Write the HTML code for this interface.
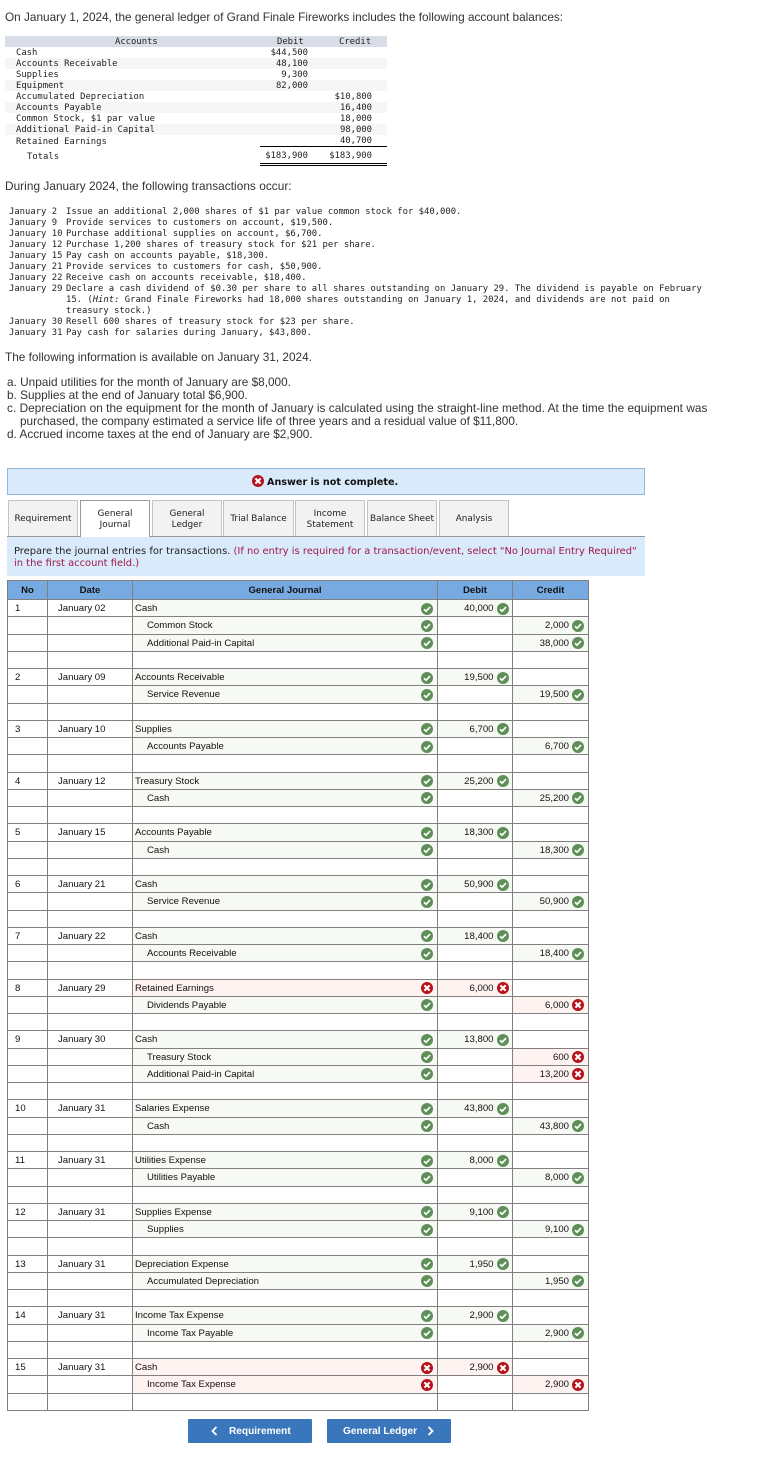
<!DOCTYPE html>
<html><head><meta charset="utf-8">
<style>
html,body{margin:0;padding:0;background:#fff}
#p{position:relative;width:781px;height:1482px;overflow:hidden;font-family:"Liberation Sans",sans-serif;color:#000}
.t{position:absolute;white-space:pre;font-size:11.8px;line-height:14px;color:#333}
.m{position:absolute;white-space:pre;font-family:"DejaVu Sans Mono",monospace;font-size:8.9px;line-height:11px;color:#222;margin-top:2px}
.rt{text-align:right}
.bar{position:absolute;left:5px;width:382px;height:11px}
.tab{position:absolute;top:500px;height:36px;box-sizing:border-box;border:1px solid #c4c4c4;border-bottom:0;background:#f2f2f2;font-family:"DejaVu Sans",sans-serif;font-size:8.9px;line-height:11px;color:#222;display:flex;align-items:center;justify-content:center;text-align:center;padding-top:2px}
#tb{position:absolute;left:7px;top:580px;width:582px;box-sizing:border-box;border:1px solid #808080;border-bottom:0;border-left-width:1px}
.r{display:flex;height:17.255px;box-sizing:border-box;border-bottom:1px solid #808080;font-size:9.6px;line-height:18px;color:#111}
.h{height:19px;background:#78aae2;font-weight:bold;font-size:9.6px;line-height:19px;text-align:center}
.r>div{box-sizing:border-box;border-right:1px solid #808080;position:relative;flex:none;white-space:pre}
.n{width:40px;padding-left:7px}
.d{width:85px;padding-left:10px}
.a{width:305px;padding-left:2px}
.a.in{padding-left:14px}
.b{width:75px;text-align:right;padding-right:18.5px}
.c{width:75px;text-align:right;padding-right:19px;border-right:0!important}
.h .n,.h .d,.h .a,.h .b,.h .c{padding:0;text-align:center}
.g{background:#f7f9f5}
.x{background:#fff3f1}
svg.i{position:absolute;width:12px;height:12px;top:2.5px;right:3px}
.a svg.i,.c svg.i{right:4px}
.btn{position:absolute;top:1419px;width:124px;height:24px;background:#3a76bb;border-radius:1px;color:#fff;font-weight:bold;font-size:10.1px;line-height:25px}
</style></head><body>
<svg width="0" height="0" style="position:absolute"><defs>
<symbol id="k" viewBox="0 0 12 12"><circle cx="6" cy="6" r="6" fill="#5f8f59"/><path d="M3 6.2L5.1 8.2L9 4.1" fill="none" stroke="#fff" stroke-width="1.7"/></symbol>
<symbol id="w" viewBox="0 0 12 12"><circle cx="6" cy="6" r="6" fill="#b5121b"/><path d="M3.4 3.4L8.6 8.6M8.6 3.4L3.4 8.6" fill="none" stroke="#fff" stroke-width="2.1"/></symbol>
</defs></svg>
<div id="p">
<div class="t" style="left:5px;top:9.5px">On January 1, 2024, the general ledger of Grand Finale Fireworks includes the following account balances:</div>

<div class="bar" style="top:36px;background:#d9dde8"></div>
<div class="bar" style="top:58px;background:#f6f6f6"></div>
<div class="bar" style="top:80px;background:#f6f6f6"></div>
<div class="bar" style="top:102px;background:#f6f6f6"></div>
<div class="bar" style="top:124px;background:#f6f6f6"></div>
<div class="m" style="left:115px;top:35px">Accounts</div>
<div class="m" style="left:277px;top:35px">Debit</div>
<div class="m" style="left:339px;top:35px">Credit</div>
<div class="m" style="left:16px;top:46px">Cash</div>
<div class="m" style="left:16px;top:57px">Accounts Receivable</div>
<div class="m" style="left:16px;top:68px">Supplies</div>
<div class="m" style="left:16px;top:79px">Equipment</div>
<div class="m" style="left:16px;top:90px">Accumulated Depreciation</div>
<div class="m" style="left:16px;top:101px">Accounts Payable</div>
<div class="m" style="left:16px;top:112px">Common Stock, $1 par value</div>
<div class="m" style="left:16px;top:123px">Additional Paid-in Capital</div>
<div class="m" style="left:16px;top:135px">Retained Earnings</div>
<div class="m" style="left:27px;top:150px">Totals</div>
<div class="m rt" style="right:473px;top:46px">$44,500</div>
<div class="m rt" style="right:473px;top:57px">48,100</div>
<div class="m rt" style="right:473px;top:68px">9,300</div>
<div class="m rt" style="right:473px;top:79px">82,000</div>
<div class="m rt" style="right:409px;top:90px">$10,800</div>
<div class="m rt" style="right:409px;top:101px">16,400</div>
<div class="m rt" style="right:409px;top:112px">18,000</div>
<div class="m rt" style="right:409px;top:123px">98,000</div>
<div class="m rt" style="right:409px;top:134px">40,700</div>
<div class="m rt" style="right:473px;top:149px">$183,900</div>
<div class="m rt" style="right:409px;top:149px">$183,900</div>
<div style="position:absolute;left:260px;top:146px;width:127px;height:1px;background:#000"></div>
<div style="position:absolute;left:260px;top:163px;width:127px;height:1px;background:#000"></div>
<div style="position:absolute;left:260px;top:165px;width:127px;height:1px;background:#000"></div>

<div class="t" style="left:5px;top:179px;letter-spacing:.05px">During January 2024, the following transactions occur:</div>

<div class="m" style="left:9px;top:205px">January 2</div><div class="m" style="left:66px;top:205px">Issue an additional 2,000 shares of $1 par value common stock for $40,000.</div>
<div class="m" style="left:9px;top:216px">January 9</div><div class="m" style="left:66px;top:216px">Provide services to customers on account, $19,500.</div>
<div class="m" style="left:9px;top:227px">January 10</div><div class="m" style="left:66px;top:227px">Purchase additional supplies on account, $6,700.</div>
<div class="m" style="left:9px;top:238px">January 12</div><div class="m" style="left:66px;top:238px">Purchase 1,200 shares of treasury stock for $21 per share.</div>
<div class="m" style="left:9px;top:249px">January 15</div><div class="m" style="left:66px;top:249px">Pay cash on accounts payable, $18,300.</div>
<div class="m" style="left:9px;top:260px">January 21</div><div class="m" style="left:66px;top:260px">Provide services to customers for cash, $50,900.</div>
<div class="m" style="left:9px;top:271px">January 22</div><div class="m" style="left:66px;top:271px">Receive cash on accounts receivable, $18,400.</div>
<div class="m" style="left:9px;top:282px">January 29</div><div class="m" style="left:66px;top:282px">Declare a cash dividend of $0.30 per share to all shares outstanding on January 29. The dividend is payable on February</div>
<div class="m" style="left:66px;top:293px">15. (<i>Hint:</i> Grand Finale Fireworks had 18,000 shares outstanding on January 1, 2024, and dividends are not paid on</div>
<div class="m" style="left:66px;top:304px">treasury stock.)</div>
<div class="m" style="left:9px;top:315px">January 30</div><div class="m" style="left:66px;top:315px">Resell 600 shares of treasury stock for $23 per share.</div>
<div class="m" style="left:9px;top:326px">January 31</div><div class="m" style="left:66px;top:326px">Pay cash for salaries during January, $43,800.</div>

<div class="t" style="left:5px;top:350px">The following information is available on January 31, 2024.</div>
<div class="t" style="left:7px;top:375px">a. Unpaid utilities for the month of January are $8,000.</div>
<div class="t" style="left:7px;top:388px">b. Supplies at the end of January total $6,900.</div>
<div class="t" style="left:7px;top:401px;letter-spacing:.04px">c. Depreciation on the equipment for the month of January is calculated using the straight-line method. At the time the equipment was</div>
<div class="t" style="left:20px;top:414px">purchased, the company estimated a service life of three years and a residual value of $11,800.</div>
<div class="t" style="left:7px;top:427px">d. Accrued income taxes at the end of January are $2,900.</div>

<div style="position:absolute;left:7px;top:468px;width:638px;height:27px;box-sizing:border-box;background:#d9ebfb;border:1px solid #8db8e0"></div>
<svg style="position:absolute;left:252px;top:475px;width:12px;height:12px"><use href="#w"/></svg>
<div style="position:absolute;left:267px;top:476px;font-family:'DejaVu Sans',sans-serif;font-weight:bold;font-size:9.65px;line-height:13px;white-space:pre;color:#111">Answer is not complete.</div>

<div class="tab" style="left:8px;width:70px">Requirement</div>
<div class="tab" style="left:80px;width:70px;height:37px;background:#fff;border-color:#999;z-index:2">General<br>Journal</div>
<div class="tab" style="left:152px;width:70px">General<br>Ledger</div>
<div class="tab" style="left:223px;width:71px">Trial Balance</div>
<div class="tab" style="left:295px;width:70px">Income<br>Statement</div>
<div class="tab" style="left:367px;width:70px">Balance Sheet</div>
<div class="tab" style="left:439px;width:70px">Analysis</div>
<div style="position:absolute;left:7px;top:536px;width:638px;height:40px;background:#d9ebfb;border-top:1px solid #999;box-sizing:border-box"></div>
<div style="position:absolute;left:14px;top:546px;font-family:'DejaVu Sans',sans-serif;font-size:9.92px;line-height:12px;white-space:pre;color:#222">Prepare the journal entries for transactions. <span style="color:#a3174a">(If no entry is required for a transaction/event, select "No Journal Entry Required"
in the first account field.)</span></div>

<div id="tb">
<div class="r h"><div class="n">No</div><div class="d">Date</div><div class="a">General Journal</div><div class="b">Debit</div><div class="c">Credit</div></div>

<div class="r"><div class="n">1</div><div class="d">January 02</div><div class="a g">Cash<svg class="i"><use href="#k"/></svg></div><div class="b g">40,000<svg class="i"><use href="#k"/></svg></div><div class="c"></div></div>
<div class="r"><div class="n"></div><div class="d"></div><div class="a in g">Common Stock<svg class="i"><use href="#k"/></svg></div><div class="b"></div><div class="c g">2,000<svg class="i"><use href="#k"/></svg></div></div>
<div class="r"><div class="n"></div><div class="d"></div><div class="a in g">Additional Paid-in Capital<svg class="i"><use href="#k"/></svg></div><div class="b"></div><div class="c g">38,000<svg class="i"><use href="#k"/></svg></div></div>
<div class="r"><div class="n"></div><div class="d"></div><div class="a"></div><div class="b"></div><div class="c"></div></div>

<div class="r"><div class="n">2</div><div class="d">January 09</div><div class="a g">Accounts Receivable<svg class="i"><use href="#k"/></svg></div><div class="b g">19,500<svg class="i"><use href="#k"/></svg></div><div class="c"></div></div>
<div class="r"><div class="n"></div><div class="d"></div><div class="a in g">Service Revenue<svg class="i"><use href="#k"/></svg></div><div class="b"></div><div class="c g">19,500<svg class="i"><use href="#k"/></svg></div></div>
<div class="r"><div class="n"></div><div class="d"></div><div class="a"></div><div class="b"></div><div class="c"></div></div>

<div class="r"><div class="n">3</div><div class="d">January 10</div><div class="a g">Supplies<svg class="i"><use href="#k"/></svg></div><div class="b g">6,700<svg class="i"><use href="#k"/></svg></div><div class="c"></div></div>
<div class="r"><div class="n"></div><div class="d"></div><div class="a in g">Accounts Payable<svg class="i"><use href="#k"/></svg></div><div class="b"></div><div class="c g">6,700<svg class="i"><use href="#k"/></svg></div></div>
<div class="r"><div class="n"></div><div class="d"></div><div class="a"></div><div class="b"></div><div class="c"></div></div>

<div class="r"><div class="n">4</div><div class="d">January 12</div><div class="a g">Treasury Stock<svg class="i"><use href="#k"/></svg></div><div class="b g">25,200<svg class="i"><use href="#k"/></svg></div><div class="c"></div></div>
<div class="r"><div class="n"></div><div class="d"></div><div class="a in g">Cash<svg class="i"><use href="#k"/></svg></div><div class="b"></div><div class="c g">25,200<svg class="i"><use href="#k"/></svg></div></div>
<div class="r"><div class="n"></div><div class="d"></div><div class="a"></div><div class="b"></div><div class="c"></div></div>

<div class="r"><div class="n">5</div><div class="d">January 15</div><div class="a g">Accounts Payable<svg class="i"><use href="#k"/></svg></div><div class="b g">18,300<svg class="i"><use href="#k"/></svg></div><div class="c"></div></div>
<div class="r"><div class="n"></div><div class="d"></div><div class="a in g">Cash<svg class="i"><use href="#k"/></svg></div><div class="b"></div><div class="c g">18,300<svg class="i"><use href="#k"/></svg></div></div>
<div class="r"><div class="n"></div><div class="d"></div><div class="a"></div><div class="b"></div><div class="c"></div></div>

<div class="r"><div class="n">6</div><div class="d">January 21</div><div class="a g">Cash<svg class="i"><use href="#k"/></svg></div><div class="b g">50,900<svg class="i"><use href="#k"/></svg></div><div class="c"></div></div>
<div class="r"><div class="n"></div><div class="d"></div><div class="a in g">Service Revenue<svg class="i"><use href="#k"/></svg></div><div class="b"></div><div class="c g">50,900<svg class="i"><use href="#k"/></svg></div></div>
<div class="r"><div class="n"></div><div class="d"></div><div class="a"></div><div class="b"></div><div class="c"></div></div>

<div class="r"><div class="n">7</div><div class="d">January 22</div><div class="a g">Cash<svg class="i"><use href="#k"/></svg></div><div class="b g">18,400<svg class="i"><use href="#k"/></svg></div><div class="c"></div></div>
<div class="r"><div class="n"></div><div class="d"></div><div class="a in g">Accounts Receivable<svg class="i"><use href="#k"/></svg></div><div class="b"></div><div class="c g">18,400<svg class="i"><use href="#k"/></svg></div></div>
<div class="r"><div class="n"></div><div class="d"></div><div class="a"></div><div class="b"></div><div class="c"></div></div>

<div class="r"><div class="n">8</div><div class="d">January 29</div><div class="a x">Retained Earnings<svg class="i"><use href="#w"/></svg></div><div class="b x">6,000<svg class="i"><use href="#w"/></svg></div><div class="c"></div></div>
<div class="r"><div class="n"></div><div class="d"></div><div class="a in g">Dividends Payable<svg class="i"><use href="#k"/></svg></div><div class="b"></div><div class="c x">6,000<svg class="i"><use href="#w"/></svg></div></div>
<div class="r"><div class="n"></div><div class="d"></div><div class="a"></div><div class="b"></div><div class="c"></div></div>

<div class="r"><div class="n">9</div><div class="d">January 30</div><div class="a g">Cash<svg class="i"><use href="#k"/></svg></div><div class="b g">13,800<svg class="i"><use href="#k"/></svg></div><div class="c"></div></div>
<div class="r"><div class="n"></div><div class="d"></div><div class="a in g">Treasury Stock<svg class="i"><use href="#k"/></svg></div><div class="b"></div><div class="c x">600<svg class="i"><use href="#w"/></svg></div></div>
<div class="r"><div class="n"></div><div class="d"></div><div class="a in g">Additional Paid-in Capital<svg class="i"><use href="#k"/></svg></div><div class="b"></div><div class="c x">13,200<svg class="i"><use href="#w"/></svg></div></div>
<div class="r"><div class="n"></div><div class="d"></div><div class="a"></div><div class="b"></div><div class="c"></div></div>

<div class="r"><div class="n">10</div><div class="d">January 31</div><div class="a g">Salaries Expense<svg class="i"><use href="#k"/></svg></div><div class="b g">43,800<svg class="i"><use href="#k"/></svg></div><div class="c"></div></div>
<div class="r"><div class="n"></div><div class="d"></div><div class="a in g">Cash<svg class="i"><use href="#k"/></svg></div><div class="b"></div><div class="c g">43,800<svg class="i"><use href="#k"/></svg></div></div>
<div class="r"><div class="n"></div><div class="d"></div><div class="a"></div><div class="b"></div><div class="c"></div></div>

<div class="r"><div class="n">11</div><div class="d">January 31</div><div class="a g">Utilities Expense<svg class="i"><use href="#k"/></svg></div><div class="b g">8,000<svg class="i"><use href="#k"/></svg></div><div class="c"></div></div>
<div class="r"><div class="n"></div><div class="d"></div><div class="a in g">Utilities Payable<svg class="i"><use href="#k"/></svg></div><div class="b"></div><div class="c g">8,000<svg class="i"><use href="#k"/></svg></div></div>
<div class="r"><div class="n"></div><div class="d"></div><div class="a"></div><div class="b"></div><div class="c"></div></div>

<div class="r"><div class="n">12</div><div class="d">January 31</div><div class="a g">Supplies Expense<svg class="i"><use href="#k"/></svg></div><div class="b g">9,100<svg class="i"><use href="#k"/></svg></div><div class="c"></div></div>
<div class="r"><div class="n"></div><div class="d"></div><div class="a in g">Supplies<svg class="i"><use href="#k"/></svg></div><div class="b"></div><div class="c g">9,100<svg class="i"><use href="#k"/></svg></div></div>
<div class="r"><div class="n"></div><div class="d"></div><div class="a"></div><div class="b"></div><div class="c"></div></div>

<div class="r"><div class="n">13</div><div class="d">January 31</div><div class="a g">Depreciation Expense<svg class="i"><use href="#k"/></svg></div><div class="b g">1,950<svg class="i"><use href="#k"/></svg></div><div class="c"></div></div>
<div class="r"><div class="n"></div><div class="d"></div><div class="a in g">Accumulated Depreciation<svg class="i"><use href="#k"/></svg></div><div class="b"></div><div class="c g">1,950<svg class="i"><use href="#k"/></svg></div></div>
<div class="r"><div class="n"></div><div class="d"></div><div class="a"></div><div class="b"></div><div class="c"></div></div>

<div class="r"><div class="n">14</div><div class="d">January 31</div><div class="a g">Income Tax Expense<svg class="i"><use href="#k"/></svg></div><div class="b g">2,900<svg class="i"><use href="#k"/></svg></div><div class="c"></div></div>
<div class="r"><div class="n"></div><div class="d"></div><div class="a in g">Income Tax Payable<svg class="i"><use href="#k"/></svg></div><div class="b"></div><div class="c g">2,900<svg class="i"><use href="#k"/></svg></div></div>
<div class="r"><div class="n"></div><div class="d"></div><div class="a"></div><div class="b"></div><div class="c"></div></div>

<div class="r"><div class="n">15</div><div class="d">January 31</div><div class="a x">Cash<svg class="i"><use href="#w"/></svg></div><div class="b x">2,900<svg class="i"><use href="#w"/></svg></div><div class="c"></div></div>
<div class="r"><div class="n"></div><div class="d"></div><div class="a in x">Income Tax Expense<svg class="i"><use href="#w"/></svg></div><div class="b"></div><div class="c x">2,900<svg class="i"><use href="#w"/></svg></div></div>
<div class="r"><div class="n"></div><div class="d"></div><div class="a"></div><div class="b"></div><div class="c"></div></div>
</div>

<div class="btn" style="left:188px"><svg style="position:absolute;left:23px;top:7px;width:7px;height:10px"><path d="M5.5 1L1.5 5L5.5 9" fill="none" stroke="#fff" stroke-width="1.8"/></svg><span style="position:absolute;left:41px">Requirement</span></div>
<div class="btn" style="left:327px"><span style="position:absolute;left:16px">General Ledger</span><svg style="position:absolute;left:100px;top:7px;width:7px;height:10px"><path d="M1.5 1L5.5 5L1.5 9" fill="none" stroke="#fff" stroke-width="1.8"/></svg></div>
</div>
</body></html>
